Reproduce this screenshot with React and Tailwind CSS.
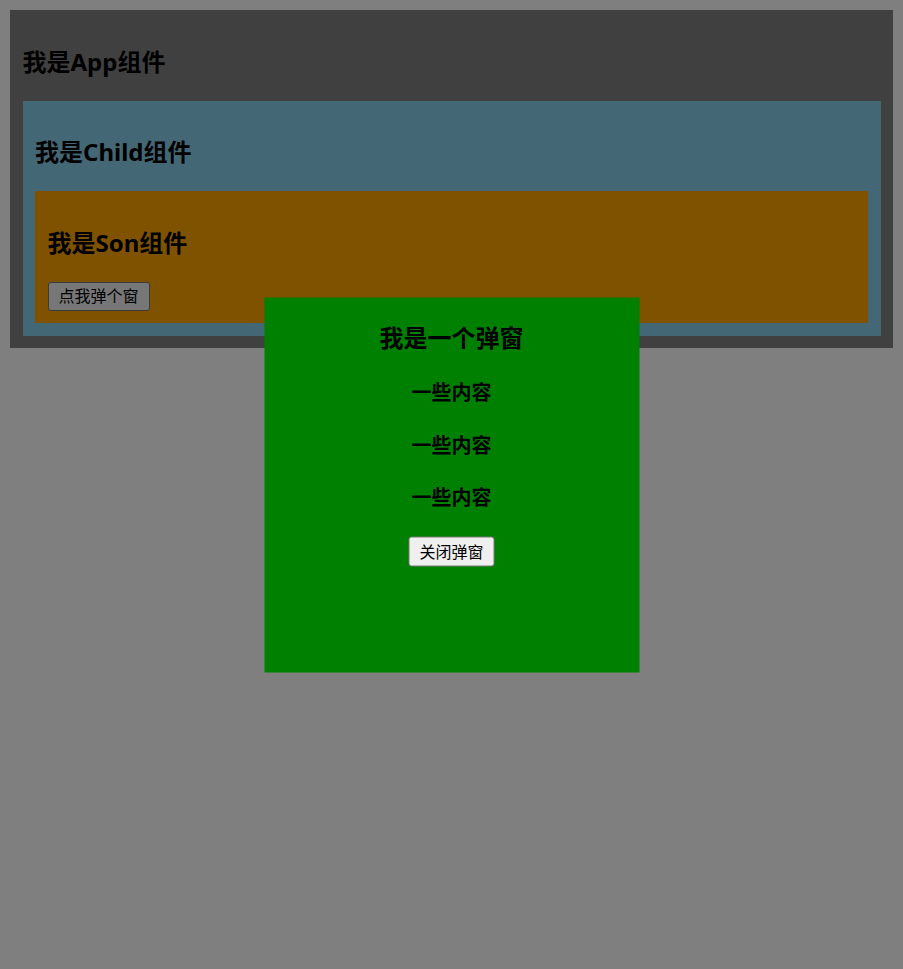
import React, { useState } from "react";

const font = { fontFamily: '"Noto Sans", "Noto Sans CJK SC", sans-serif' };

const Son = ({ onOpen }) => {
    return (
        <div className="bg-[#ffa500] p-[12.5px]">
            <h3 className="my-5 text-[24px] leading-[38px] font-bold text-black">我是Son组件</h3>
            <button
                onClick={onOpen}
                className="block bg-[#efefef] border border-[#767676] rounded-[3px] px-[10px] py-[2.5px] text-[16px] leading-[22px] text-black"
            >
                点我弹个窗
            </button>
        </div>
    );
};

const Child = ({ onOpen }) => {
    return (
        <div className="bg-[#87ceeb] p-[12.5px]">
            <h3 className="my-5 text-[24px] leading-[38px] font-bold text-black">我是Child组件</h3>
            <Son onOpen={onOpen} />
        </div>
    );
};

const Modal = ({ onClose }) => {
    return (
        <div className="fixed inset-0 z-10">
            {/* mask */}
            <div className="absolute inset-0 bg-black/50"></div>

            {/* dialog */}
            <div className="absolute left-1/2 top-1/2 -translate-x-1/2 -translate-y-1/2 w-[375px] h-[375px] bg-[#008000] flex flex-col items-center pt-[24.5px] text-black">
                <h2 className="text-[24px] leading-[32px] font-bold">我是一个弹窗</h2>
                <h3 className="mt-[25px] text-[20px] leading-[28px] font-bold">一些内容</h3>
                <h3 className="mt-[24.5px] text-[20px] leading-[28px] font-bold">一些内容</h3>
                <h3 className="mt-[24.5px] text-[20px] leading-[28px] font-bold">一些内容</h3>
                <button
                    onClick={onClose}
                    className="mt-[24.5px] bg-[#efefef] border border-[#767676] rounded-[3px] px-[10px] py-[3px] text-[16px] leading-[22px]"
                >
                    关闭弹窗
                </button>
            </div>
        </div>
    );
};

export default function App() {
    const [open, setOpen] = useState(true);

    return (
        <div className="min-h-screen bg-white p-[10px]" style={font}>
            <div className="bg-[#808080] p-[12.5px]">
                <h3 className="my-5 text-[24px] leading-[38px] font-bold text-black">我是App组件</h3>
                <Child onOpen={() => setOpen(true)} />
            </div>

            {open && <Modal onClose={() => setOpen(false)} />}
        </div>
    );
}
